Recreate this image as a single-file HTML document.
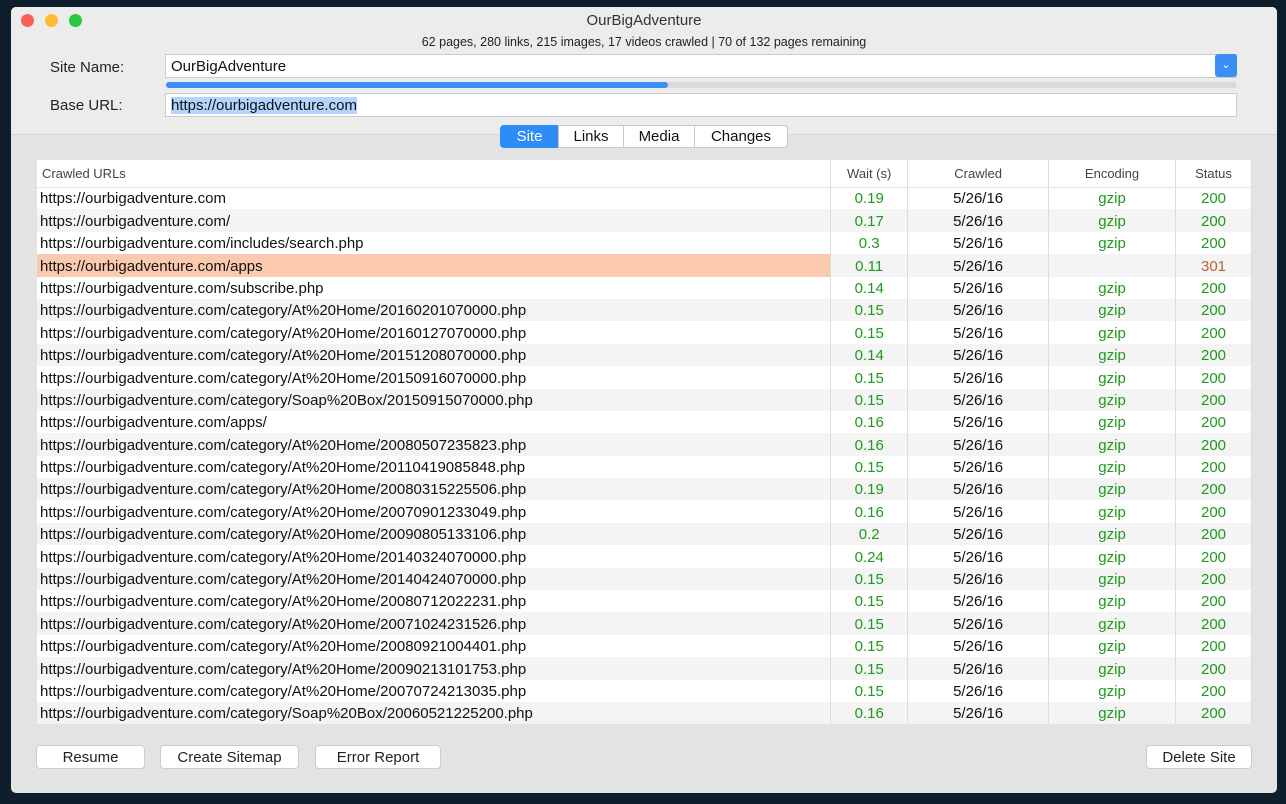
<!DOCTYPE html>
<html><head><meta charset="utf-8"><style>
*{box-sizing:border-box;margin:0;padding:0}
body{width:1286px;height:804px;background:#0f1e2c;font-family:"Liberation Sans",sans-serif;position:relative;overflow:hidden}
.win{position:absolute;left:11px;top:7px;width:1266px;height:786px;background:#e3e3e3;border-radius:5px;overflow:hidden}
.top{position:absolute;left:0;top:0;width:100%;height:128px;background:#ececec;border-bottom:1px solid #d6d6d6}
.tb{position:absolute;left:0;top:1px;width:100%;text-align:center;font-size:15px;line-height:26px;color:#333}
.dot{position:absolute;top:7px;width:13px;height:13px;border-radius:50%}
.abs{position:absolute}
.lbl{font-size:15px;color:#222}
.inp{background:#fff;border:1px solid #ccc;font-size:15px;padding-left:5px;color:#111}
.tab{position:absolute;top:118px;height:23px;font-size:15px;line-height:22px;text-align:center;background:#fff;border:1px solid #c8c8c8;color:#111}
table{position:absolute;left:26px;top:153px;width:1215px;border-collapse:collapse;background:#fff;font-size:15px}
td{height:22.4px;padding:0;white-space:nowrap;border-right:1px solid #ddd;line-height:20px;vertical-align:bottom}
th{height:27px;font-weight:normal;font-size:13px;color:#444;border-right:1px solid #ddd;border-bottom:1px solid #e2e2e2}
#b tr:nth-child(even) td{background:#f4f4f4}
td.u{padding-left:3px;color:#111;text-align:left}
td.g{color:#1d9a1d;text-align:center}
td.c{text-align:center;color:#111}
.btn{position:absolute;top:738px;height:24px;background:#fff;border:1px solid #ccc;border-radius:4px;font-size:15px;line-height:24px;text-align:center;color:#222}
</style></head><body>
<div class="win">
<div class="top"></div>
<div class="tb">OurBigAdventure</div>
<div class="dot" style="left:10px;background:#fc5f57"></div>
<div class="dot" style="left:34px;background:#fdbc2e"></div>
<div class="dot" style="left:58px;background:#28c840"></div>
<div class="abs" style="left:0;top:28px;width:100%;text-align:center;font-size:12.5px;color:#222">62 pages, 280 links, 215 images, 17 videos crawled | 70 of 132 pages remaining</div>
<div class="abs lbl" style="left:39px;top:52px">Site Name:</div>
<div class="abs inp" style="left:154px;top:47px;width:1072px;height:24px;line-height:24px">OurBigAdventure</div>
<div class="abs" style="left:1204px;top:47px;width:22px;height:23px;background:#3a8ef5;border-radius:3px;color:#fff;font-size:11px;text-align:center;line-height:22px">&#8964;</div>
<div class="abs" style="left:155px;top:75px;width:1071px;height:6px;background:#d9d9d9;border-radius:3px"></div>
<div class="abs" style="left:155px;top:75px;width:502px;height:6px;background:#3a8ef5;border-radius:3px"></div>
<div class="abs lbl" style="left:39px;top:90px">Base URL:</div>
<div class="abs inp" style="left:154px;top:86px;width:1072px;height:24px;line-height:24px"><span style="background:#b3d5fd">https://ourbigadventure.com</span></div>
<div class="tab" style="left:489px;width:59px;background:#2f8bf6;color:#fff;border-color:#2f8bf6;border-radius:4px 0 0 4px">Site</div>
<div class="tab" style="left:547px;width:66px">Links</div>
<div class="tab" style="left:612px;width:72px">Media</div>
<div class="tab" style="left:683px;width:94px;border-radius:0 4px 4px 0">Changes</div>
<table>
<colgroup><col style="width:794px"><col style="width:77px"><col style="width:141px"><col style="width:127px"><col style="width:76px"></colgroup>
<thead><tr><th style="text-align:left;padding-left:5px">Crawled URLs</th><th>Wait (s)</th><th>Crawled</th><th>Encoding</th><th>Status</th></tr></thead>
<tbody id="b">
<tr><td class="u">https://ourbigadventure.com</td><td class="g">0.19</td><td class="c">5/26/16</td><td class="g">gzip</td><td class="g">200</td></tr>
<tr><td class="u">https://ourbigadventure.com/</td><td class="g">0.17</td><td class="c">5/26/16</td><td class="g">gzip</td><td class="g">200</td></tr>
<tr><td class="u">https://ourbigadventure.com/includes/search.php</td><td class="g">0.3</td><td class="c">5/26/16</td><td class="g">gzip</td><td class="g">200</td></tr>
<tr><td class="u" style="background:#fbc9ad">https://ourbigadventure.com/apps</td><td class="g">0.11</td><td class="c">5/26/16</td><td class="g"></td><td class="g" style="color:#b8642a">301</td></tr>
<tr><td class="u">https://ourbigadventure.com/subscribe.php</td><td class="g">0.14</td><td class="c">5/26/16</td><td class="g">gzip</td><td class="g">200</td></tr>
<tr><td class="u">https://ourbigadventure.com/category/At%20Home/20160201070000.php</td><td class="g">0.15</td><td class="c">5/26/16</td><td class="g">gzip</td><td class="g">200</td></tr>
<tr><td class="u">https://ourbigadventure.com/category/At%20Home/20160127070000.php</td><td class="g">0.15</td><td class="c">5/26/16</td><td class="g">gzip</td><td class="g">200</td></tr>
<tr><td class="u">https://ourbigadventure.com/category/At%20Home/20151208070000.php</td><td class="g">0.14</td><td class="c">5/26/16</td><td class="g">gzip</td><td class="g">200</td></tr>
<tr><td class="u">https://ourbigadventure.com/category/At%20Home/20150916070000.php</td><td class="g">0.15</td><td class="c">5/26/16</td><td class="g">gzip</td><td class="g">200</td></tr>
<tr><td class="u">https://ourbigadventure.com/category/Soap%20Box/20150915070000.php</td><td class="g">0.15</td><td class="c">5/26/16</td><td class="g">gzip</td><td class="g">200</td></tr>
<tr><td class="u">https://ourbigadventure.com/apps/</td><td class="g">0.16</td><td class="c">5/26/16</td><td class="g">gzip</td><td class="g">200</td></tr>
<tr><td class="u">https://ourbigadventure.com/category/At%20Home/20080507235823.php</td><td class="g">0.16</td><td class="c">5/26/16</td><td class="g">gzip</td><td class="g">200</td></tr>
<tr><td class="u">https://ourbigadventure.com/category/At%20Home/20110419085848.php</td><td class="g">0.15</td><td class="c">5/26/16</td><td class="g">gzip</td><td class="g">200</td></tr>
<tr><td class="u">https://ourbigadventure.com/category/At%20Home/20080315225506.php</td><td class="g">0.19</td><td class="c">5/26/16</td><td class="g">gzip</td><td class="g">200</td></tr>
<tr><td class="u">https://ourbigadventure.com/category/At%20Home/20070901233049.php</td><td class="g">0.16</td><td class="c">5/26/16</td><td class="g">gzip</td><td class="g">200</td></tr>
<tr><td class="u">https://ourbigadventure.com/category/At%20Home/20090805133106.php</td><td class="g">0.2</td><td class="c">5/26/16</td><td class="g">gzip</td><td class="g">200</td></tr>
<tr><td class="u">https://ourbigadventure.com/category/At%20Home/20140324070000.php</td><td class="g">0.24</td><td class="c">5/26/16</td><td class="g">gzip</td><td class="g">200</td></tr>
<tr><td class="u">https://ourbigadventure.com/category/At%20Home/20140424070000.php</td><td class="g">0.15</td><td class="c">5/26/16</td><td class="g">gzip</td><td class="g">200</td></tr>
<tr><td class="u">https://ourbigadventure.com/category/At%20Home/20080712022231.php</td><td class="g">0.15</td><td class="c">5/26/16</td><td class="g">gzip</td><td class="g">200</td></tr>
<tr><td class="u">https://ourbigadventure.com/category/At%20Home/20071024231526.php</td><td class="g">0.15</td><td class="c">5/26/16</td><td class="g">gzip</td><td class="g">200</td></tr>
<tr><td class="u">https://ourbigadventure.com/category/At%20Home/20080921004401.php</td><td class="g">0.15</td><td class="c">5/26/16</td><td class="g">gzip</td><td class="g">200</td></tr>
<tr><td class="u">https://ourbigadventure.com/category/At%20Home/20090213101753.php</td><td class="g">0.15</td><td class="c">5/26/16</td><td class="g">gzip</td><td class="g">200</td></tr>
<tr><td class="u">https://ourbigadventure.com/category/At%20Home/20070724213035.php</td><td class="g">0.15</td><td class="c">5/26/16</td><td class="g">gzip</td><td class="g">200</td></tr>
<tr><td class="u">https://ourbigadventure.com/category/Soap%20Box/20060521225200.php</td><td class="g">0.16</td><td class="c">5/26/16</td><td class="g">gzip</td><td class="g">200</td></tr>
</tbody>
</table>
<div class="btn" style="left:25px;width:109px">Resume</div>
<div class="btn" style="left:149px;width:139px">Create Sitemap</div>
<div class="btn" style="left:304px;width:126px">Error Report</div>
<div class="btn" style="left:1135px;width:106px">Delete Site</div>
</div>
</body></html>
